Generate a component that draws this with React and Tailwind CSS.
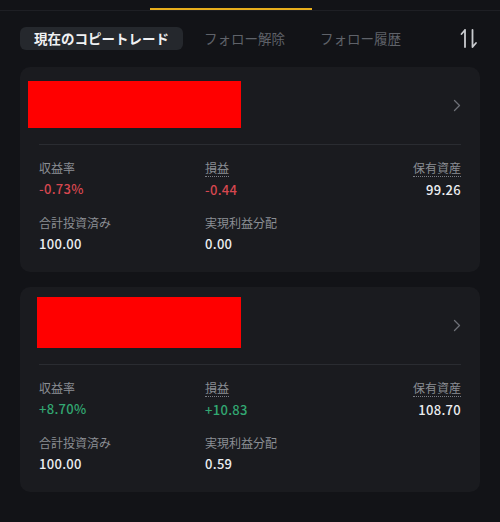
import React from 'react'
import clsx from 'clsx'

const font = { fontFamily: '"Noto Sans CJK JP", "Noto Sans", sans-serif' }

const SortIcon = () => (
  <svg width="18" height="21" viewBox="0 0 18 21" fill="none" stroke="#c9cbcf" strokeWidth="1.8" strokeLinecap="round" strokeLinejoin="round">
    <path d="M5 2v17M5 2L1.5 6" />
    <path d="M12.5 2v17M12.5 19L16 15" />
  </svg>
)

const Chevron = () => (
  <svg width="8" height="13" viewBox="0 0 8 13" fill="none" stroke="#6d7077" strokeWidth="1.3" strokeLinecap="round" strokeLinejoin="round">
    <path d="M1.5 1.5l5 5-5 5" />
  </svg>
)

const Stat = ({ label, value, tone, dotted, right }) => (
  <div className={clsx('flex flex-col', right ? 'items-end' : 'items-start')}>
    <span
      className={clsx(
        'text-[12px] leading-[17px] text-[#8b8e94]',
        dotted && 'border-b border-dotted border-[#7a7d85]'
      )}
    >
      {label}
    </span>
    <span
      className={clsx(
        'mt-[4px] text-[13px] leading-[18px] font-medium tracking-[0.3px]',
        tone === 'down' && 'text-[#d6474f]',
        tone === 'up' && 'text-[#32a872]',
        !tone && 'text-[#eceef1]'
      )}
    >
      {value}
    </span>
  </div>
)

const TradeCard = ({ redBox, data }) => (
  <div className="mx-[20px] rounded-[10px] bg-[#1a1b1f] px-[19px] pb-[19px]">
    <div className="relative flex h-[77px] items-center justify-end">
      <div className={clsx('absolute bg-[#ff0000]', redBox)} />
      <Chevron />
    </div>
    <div className="h-px bg-[#2a2c31]" />
    <div className="mt-[14px] grid grid-cols-[166px_1fr_auto]">
      <Stat label="収益率" value={data.rate} tone={data.tone} />
      <Stat label="損益" value={data.pnl} tone={data.tone} dotted />
      <Stat label="保有資産" value={data.assets} dotted right />
    </div>
    <div className="mt-[15px] grid grid-cols-[166px_1fr_auto]">
      <Stat label="合計投資済み" value={data.invested} />
      <Stat label="実現利益分配" value={data.shared} />
    </div>
  </div>
)

export default function App() {
  return (
    <div className="min-h-[522px] w-[500px] bg-[#121317] text-white" style={font}>
      <div className="border-b border-[#1e1f24] pt-[8px]">
        <div className="ml-[150px] h-[2px] w-[162px] bg-[#e8ae1c]" />
      </div>

      <div className="mt-[16px] flex items-center pl-[20px] pr-[22px]">
        <div className="flex h-[23px] items-center rounded-[6px] bg-[#25282d] px-[14px] text-[13.5px] font-bold text-[#f0f1f3]">
          現在のコピートレード
        </div>
        <div className="ml-[21px] text-[13.5px] text-[#5f6269]">フォロー解除</div>
        <div className="ml-[35px] text-[13.5px] text-[#5f6269]">フォロー履歴</div>
        <div className="ml-auto flex items-center">
          <SortIcon />
        </div>
      </div>

      <div className="mt-[17px] flex flex-col gap-[15px]">
        <TradeCard
          redBox="left-[-11px] top-[14px] h-[47px] w-[213px]"
          data={{ rate: '-0.73%', pnl: '-0.44', assets: '99.26', invested: '100.00', shared: '0.00', tone: 'down' }}
        />
        <TradeCard
          redBox="left-[-2px] top-[10px] h-[51px] w-[204px]"
          data={{ rate: '+8.70%', pnl: '+10.83', assets: '108.70', invested: '100.00', shared: '0.59', tone: 'up' }}
        />
      </div>
    </div>
  )
}
